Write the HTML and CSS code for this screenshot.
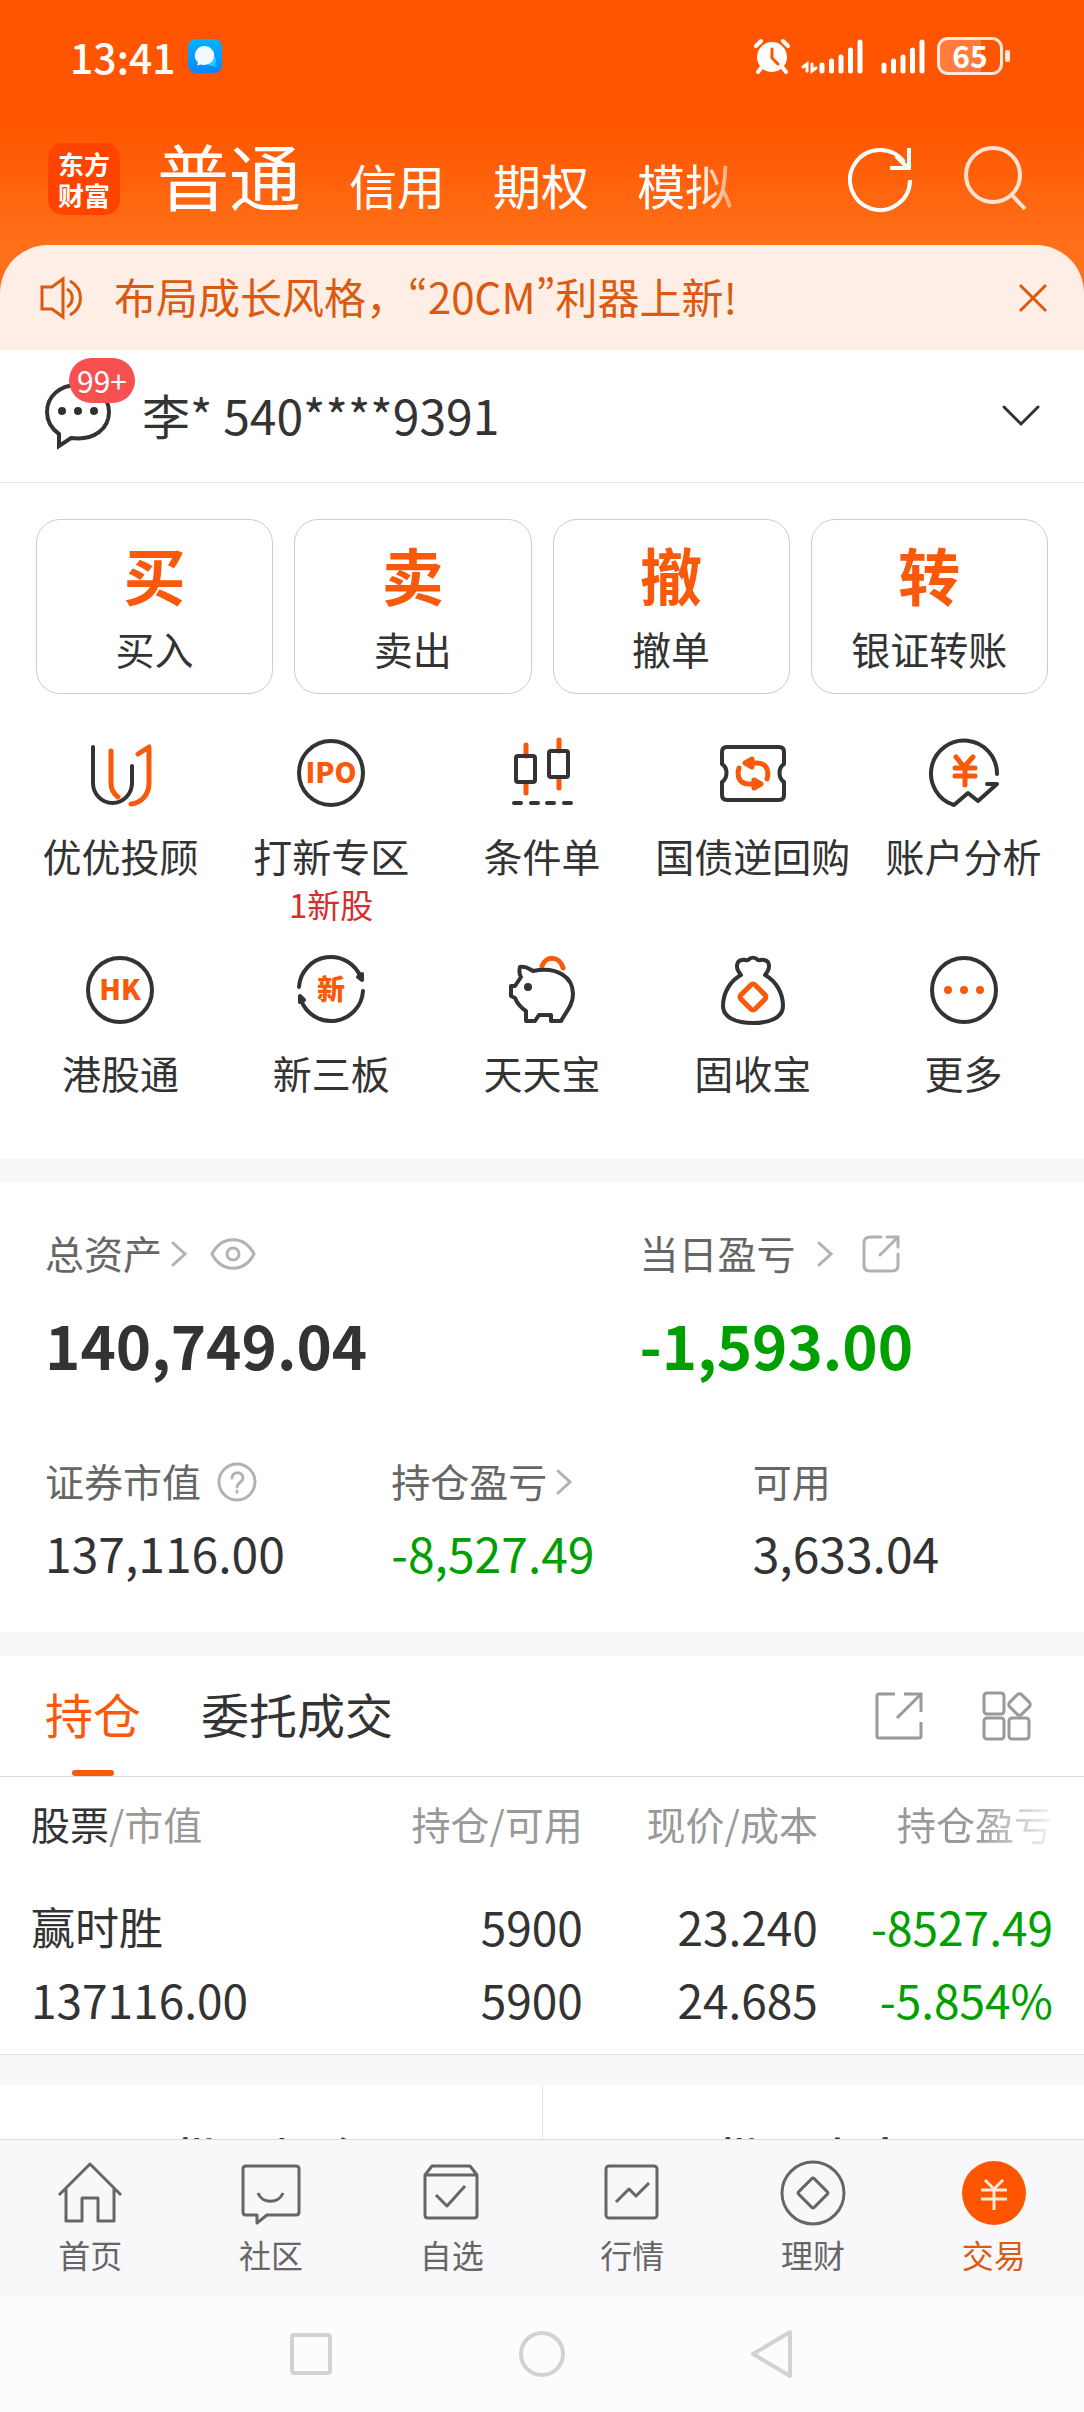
FILE: index.html
```
<!DOCTYPE html>
<html lang="zh-CN">
<head>
  <meta charset="UTF-8">
  <meta name="viewport" content="width=device-width, initial-scale=1.0">
  <title>交易 - 东方财富</title>
  <link rel="stylesheet" href="styles.css">
</head>
<body>
  <div class="top">
    <!-- Status bar -->
    <div class="status-bar">
      <span class="status-time">13:41</span>
      <svg class="status-chat" width="34" height="34" viewBox="0 0 34 34">
        <defs>
          <linearGradient id="chat-bg" x1="0" y1="0" x2="0" y2="1">
            <stop offset="0" stop-color="#00b4ff"/>
            <stop offset="1" stop-color="#0a84ff"/>
          </linearGradient>
        </defs>
        <rect width="34" height="34" rx="8" fill="url(#chat-bg)"/>
        <path d="M19 22a6 4 0 0 0 6 5l3 1-1-3c2-3 1-6 0-7z" fill="#19d2ff"/>
        <path d="M16 7a10 9.500 0 1 1-3 18.500l-4 1 1-3A9.500 9.500 0 0 1 16 7z" fill="#f2f9ff"/>
      </svg>
      <div class="status-icons">
        <svg width="38" height="36" viewBox="0 0 38 36" fill="none" stroke="#fff" stroke-width="4" stroke-linecap="round">
          <circle cx="19" cy="19" r="15" fill="#fff" stroke="none"/>
          <path d="M3 8l5-5M35 8l-5-5M8 30l-3 4M30 30l3 4"/>
          <path d="M19 11v9l6 6" stroke="#ff5500" stroke-width="3"/>
        </svg>
        <svg class="signal" width="62" height="36" viewBox="0 0 62 36" fill="none" stroke="#fff" stroke-width="5" stroke-linecap="round">
          <path d="M6 33V26l-4 3M11 26v7l4-3" stroke-width="3"/>
          <path d="M21 27v6M30.500 23v10M40 19v14M49.500 12v21M59 4v29"/>
        </svg>
        <svg class="signal-second" width="44" height="36" viewBox="0 0 44 36" fill="none" stroke="#fff" stroke-width="5" stroke-linecap="round">
          <path d="M3 27v6M12.500 23v10M22 19v14M31.500 12v21M41 4v29"/>
        </svg>
        <div class="battery"><span>65</span></div>
      </div>
    </div>

    <!-- App header -->
    <header class="header">
      <div class="logo"><span>东方</span><span>财富</span></div>
      <nav class="header-tabs">
        <a class="header-tab active" href="#">普通</a>
        <a class="header-tab" href="#">信用</a>
        <a class="header-tab" href="#">期权</a>
        <a class="header-tab fading" href="#">模拟</a>
      </nav>
      <button class="icon-button" aria-label="刷新">
        <svg width="66" height="68" viewBox="0 0 66 68" fill="none" stroke="#fff" stroke-width="4">
          <path d="M62 35A30 30 0 1 1 56 17"/>
          <path d="M61 3v20H42M59 22L48 11"/>
        </svg>
      </button>
      <button class="icon-button" aria-label="搜索">
        <svg width="66" height="68" viewBox="0 0 66 68" fill="none" stroke="#ffe2d2" stroke-width="4">
          <circle cx="31" cy="30" r="27"/>
          <path d="M49 49l14 15"/>
        </svg>
      </button>
    </header>

    <!-- Notice -->
    <div class="notice">
      <svg width="44" height="44" viewBox="0 0 44 44" fill="none" stroke="#dc5a10" stroke-width="3">
        <path d="M3 11h10l11-8v38l-11-8H3z"/>
        <path d="M28 13c7 4 7 14 0 18M31 5c14 8 14 26 0 34"/>
      </svg>
      <p class="notice-text">布局成长风格，<span class="quote">“20CM”</span>利器上新!</p>
      <button class="icon-button" aria-label="关闭">
        <svg width="30" height="30" viewBox="0 0 30 30" fill="none" stroke="#dc5a10" stroke-width="3">
          <path d="M2 2l26 26M28 2L2 28"/>
        </svg>
      </button>
    </div>
  </div>

  <main class="content">
    <!-- Account -->
    <div class="account">
      <button class="messages" aria-label="消息">
        <svg width="68" height="68" viewBox="0 0 68 68" fill="none" stroke="#333" stroke-width="4">
          <path d="M34 3C15 3 3 15 3 30c0 10 5 17 12 22v12l12-8c24 3 38-10 38-26C65 15 52 3 34 3z"/>
          <g fill="#333" stroke="none">
            <circle cx="18" cy="29" r="4"/><circle cx="34" cy="29" r="4"/><circle cx="50" cy="29" r="4"/>
          </g>
        </svg>
        <span class="badge">99+</span>
      </button>
      <span class="account-name">李* 540****9391</span>
      <button class="icon-button" aria-label="切换账户">
        <svg width="38" height="22" viewBox="0 0 38 22" fill="none" stroke="#333" stroke-width="3" stroke-linecap="round">
          <path d="M2 2l17 17L36 2"/>
        </svg>
      </button>
    </div>

    <!-- Trade buttons -->
    <div class="trade-actions">
      <button class="trade-card"><b>买</b><span>买入</span></button>
      <button class="trade-card"><b>卖</b><span>卖出</span></button>
      <button class="trade-card"><b>撤</b><span>撤单</span></button>
      <button class="trade-card"><b>转</b><span>银证转账</span></button>
    </div>

    <!-- Services -->
    <div class="services">
      <a class="service" href="#">
        <svg class="service-icon" viewBox="0 0 72 72">
          <path class="dark" d="M9 10v36a19.500 20 0 0 0 39 0V29"/>
          <path class="orange" d="M27 14v32c0 6 3 11 7 14M54 17l11-7v36c0 12-8 20-18 21"/>
        </svg>
        <span>优优投顾</span>
      </a>
      <a class="service" href="#">
        <svg class="service-icon" viewBox="0 0 72 72">
          <circle class="dark" cx="36" cy="36" r="32"/>
          <text class="icon-text" x="36" y="46">IPO</text>
        </svg>
        <span>打新专区</span>
        <small>1新股</small>
      </a>
      <a class="service" href="#">
        <svg class="service-icon" viewBox="0 0 72 72">
          <path class="orange" d="M20 8v11M20 46v10M53 3v11M53 41v10"/>
          <rect class="dark" x="10" y="19" width="19" height="26" rx="2"/>
          <rect class="dark" x="43" y="14" width="19" height="26" rx="2"/>
          <path class="dark" d="M8 66h7M25 66h7M41 66h7M58 66h7"/>
        </svg>
        <span>条件单</span>
      </a>
      <a class="service" href="#">
        <svg class="service-icon" viewBox="0 0 72 72">
          <path class="dark" d="M10 10h52q5 0 5 5v12c-6 4-6 14 0 18v13q0 5-5 5H10q-5 0-5-5V45c6-4 6-14 0-18V15q0-5 5-5z"/>
          <path class="orange" d="M22 31c-3 10 2 16 10 16h6M50 42c3-10-2-16-10-16h-6"/>
          <path class="orange" d="M35 22v8l-7-4zM37 43v8l7-4z" fill="#f9590a"/>
        </svg>
        <span>国债逆回购</span>
      </a>
      <a class="service" href="#">
        <svg class="service-icon" viewBox="0 0 72 72">
          <path class="dark" d="M69 37A33 33 0 1 0 26 68L40 56l10 8 19-17H59"/>
          <path class="orange" d="M28 20l8 10 9-10M27 31h20M27 39h20M37 30v18"/>
        </svg>
        <span>账户分析</span>
      </a>
      <a class="service" href="#">
        <svg class="service-icon" viewBox="0 0 72 72">
          <circle class="dark" cx="36" cy="36" r="32"/>
          <text class="icon-text" x="36" y="46">HK</text>
        </svg>
        <span>港股通</span>
      </a>
      <a class="service" href="#">
        <svg class="service-icon" viewBox="0 0 72 72">
          <path class="dark" d="M4 33A32 32 0 0 1 66 24M68 37A32 32 0 0 1 6 46"/>
          <path class="dark" d="M63 23l4-3v6zM5 48l0-6 4 4z" fill="#333"/>
          <text class="icon-text" x="36" y="46">新</text>
        </svg>
        <span>新三板</span>
      </a>
      <a class="service" href="#">
        <svg class="service-icon" viewBox="0 0 72 72">
          <path class="orange" d="M36 12c4-11 18-10 21 2" stroke-width="6"/>
          <path class="dark" d="M14 13c7-1 9 2 13 4 24-5 40 6 40 23 0 11-7 18-12 27H45v-6H33l-4 6H20V57c-6-4-9-8-11-13l-4-2V32h4l6-9c-2-3-2-6-1-10z"/>
          <circle cx="22" cy="33" r="4" fill="#333"/>
        </svg>
        <span>天天宝</span>
      </a>
      <a class="service" href="#">
        <svg class="service-icon" viewBox="0 0 72 72">
          <path class="dark" d="M24 21c-6-7-5-14 1-15 3-1 4 1 6 0 3-3 7-3 10 0 2 1 3-1 6 0 6 1 7 8 1 15 11 6 18 18 18 31 0 12-14 17-30 17S6 64 6 52c0-13 7-25 18-31z"/>
          <rect class="orange" x="26" y="33" width="20" height="20" rx="3" transform="rotate(45 36 43)"/>
        </svg>
        <span>固收宝</span>
      </a>
      <a class="service" href="#">
        <svg class="service-icon" viewBox="0 0 72 72">
          <circle class="dark" cx="36" cy="36" r="32"/>
          <g fill="#f9590a">
            <circle cx="20" cy="36" r="4"/><circle cx="36" cy="36" r="4"/><circle cx="52" cy="36" r="4"/>
          </g>
        </svg>
        <span>更多</span>
      </a>
    </div>

    <!-- Assets -->
    <section class="assets">
      <div class="assets-main">
        <div>
          <div class="label">总资产
            <svg class="chevron" viewBox="0 0 18 28"><path d="M3 3l12 11L3 25"/></svg>
            <svg class="eye" width="46" height="34" viewBox="0 0 46 34">
              <path d="M2 17C12-2 34-2 44 17 34 36 12 36 2 17z"/><circle cx="23" cy="17" r="6"/>
            </svg>
          </div>
          <div class="total">140,749.04</div>
        </div>
        <div>
          <div class="label">当日盈亏
            <svg class="chevron spaced" viewBox="0 0 18 28"><path d="M3 3l12 11L3 25"/></svg>
            <svg class="share" width="40" height="40" viewBox="0 0 40 40">
              <path d="M20 3H9Q3 3 3 9v22q0 6 6 6h22q6 0 6-6V20M26 3h11v10M36 4L19 21"/>
            </svg>
          </div>
          <div class="total down">-1,593.00</div>
        </div>
      </div>
      <div class="assets-detail">
        <div>
          <div class="label">证券市值
            <svg class="help" width="40" height="40" viewBox="0 0 40 40">
              <circle cx="20" cy="20" r="18"/>
              <path d="M15 16c0-7 11-7 11 0 0 4-6 5-6 9M20 29v1"/>
            </svg>
          </div>
          <div class="amount">137,116.00</div>
        </div>
        <div>
          <div class="label">持仓盈亏
            <svg class="chevron" viewBox="0 0 18 28"><path d="M3 3l12 11L3 25"/></svg>
          </div>
          <div class="amount down">-8,527.49</div>
        </div>
        <div>
          <div class="label">可用</div>
          <div class="amount">3,633.04</div>
        </div>
      </div>
    </section>

    <!-- Positions -->
    <section class="positions">
      <div class="position-tabs">
        <button class="position-tab active">持仓</button>
        <button class="position-tab">委托成交</button>
        <div class="position-tools">
          <button class="icon-button" aria-label="分享">
            <svg width="48" height="48" viewBox="0 0 48 48" fill="none" stroke="#999" stroke-width="3">
              <path d="M20 2H4Q2 2 2 4v40q0 2 2 2h40q2 0 2-2V30M29 2h17v18M45 3L22 26"/>
            </svg>
          </button>
          <button class="icon-button" aria-label="布局">
            <svg width="50" height="50" viewBox="0 0 50 50" fill="none" stroke="#999" stroke-width="3">
              <rect x="2" y="2" width="20" height="21" rx="3"/>
              <rect x="2" y="27" width="20" height="21" rx="3"/>
              <rect x="27" y="27" width="20" height="21" rx="3"/>
              <rect x="29" y="5" width="17" height="17" rx="3" transform="rotate(45 37.500 13.500)"/>
            </svg>
          </button>
        </div>
      </div>
      <table class="holdings">
        <thead>
          <tr>
            <th><span class="sorted">股票</span>/市值</th>
            <th>持仓/可用</th>
            <th>现价/成本</th>
            <th><span class="fade-out">持仓盈亏</span></th>
          </tr>
        </thead>
        <tbody>
          <tr>
            <td><span class="stock-name">赢时胜</span><br>137116.00</td>
            <td>5900<br>5900</td>
            <td>23.240<br>24.685</td>
            <td class="down">-8527.49<br>-5.854%</td>
          </tr>
        </tbody>
      </table>
    </section>

    <div class="batch">
      <button class="batch-button">批量加仓</button>
      <button class="batch-button">批量卖出</button>
    </div>
  </main>

  <!-- Bottom tabs -->
  <nav class="tab-bar">
    <a class="tab" href="#">
      <svg viewBox="0 0 66 66"><path d="M2 35L33 4l31 31M9 29v32h16V38h16v23h16V29"/></svg>
      <span>首页</span>
    </a>
    <a class="tab" href="#">
      <svg viewBox="0 0 66 66"><path d="M8 6h50q3 0 3 3v43q0 3-3 3H29l-10 8v-8H8q-3 0-3-3V9q0-3 3-3zM20 33c4 11 21 11 25 0"/></svg>
      <span>社区</span>
    </a>
    <a class="tab" href="#">
      <svg viewBox="0 0 66 66"><path d="M6 15l7-9h38l7 9v40q0 3-3 3H9q-3 0-3-3zM6 15h52M17 35l11 11 18-20"/></svg>
      <span>自选</span>
    </a>
    <a class="tab" href="#">
      <svg viewBox="0 0 66 66"><rect x="7" y="6" width="51" height="52" rx="3"/><path d="M17 42l13-13 7 7 13-13"/></svg>
      <span>行情</span>
    </a>
    <a class="tab" href="#">
      <svg viewBox="0 0 66 66"><circle cx="33" cy="33" r="31"/><rect x="22" y="22" width="22" height="22" rx="2" transform="rotate(45 33 33)"/></svg>
      <span>理财</span>
    </a>
    <a class="tab active" href="#">
      <svg viewBox="0 0 66 66"><circle cx="33" cy="33" r="32" fill="#ff5500" stroke="none"/><path d="M24 20l9 9 9-9M20 30h26M20 39h26M33 29v21" stroke="#ffe9d8"/></svg>
      <span>交易</span>
    </a>
  </nav>

  <!-- System navigation -->
  <div class="system-nav">
    <button class="icon-button" aria-label="最近任务">
      <svg width="50" height="50" viewBox="0 0 50 50"><rect x="6" y="6" width="38" height="38" rx="2"/></svg>
    </button>
    <button class="icon-button" aria-label="主屏幕">
      <svg width="50" height="50" viewBox="0 0 50 50"><circle cx="25" cy="25" r="21"/></svg>
    </button>
    <button class="icon-button" aria-label="返回">
      <svg width="50" height="50" viewBox="0 0 50 50"><path d="M5 25L42 3v44z" stroke-linejoin="round"/></svg>
    </button>
  </div>
</body>
</html>
```

FILE: styles.css
```
* {
  box-sizing: border-box;
}

body {
  display: flex;
  flex-direction: column;
  height: 100vh;
  margin: 0;
  overflow: hidden;
  font-family: "Noto Sans CJK SC", "Noto Sans", sans-serif;
  font-size: 39px;
  line-height: 48px;
  color: #333;
  background-color: #fff;
}

a {
  color: inherit;
  text-decoration: none;
}

button {
  padding: 0;
  border: none;
  background: none;
  font: inherit;
  color: inherit;
  cursor: pointer;
}

svg {
  display: block;
  flex-shrink: 0;
}

/* Orange top area */
.top {
  flex-shrink: 0;
  background: linear-gradient(to bottom, #ff5500 125px, #ff7019 245px);
}

.status-bar {
  display: flex;
  align-items: center;
  height: 112px;
  padding: 0 81px 0 70px;
  color: #fff;
}

.status-time {
  font-size: 41px;
  font-weight: 500;
}

.status-chat {
  margin-left: 12px;
}

.status-icons {
  display: flex;
  align-items: center;
  margin-left: auto;
}

.signal {
  margin-left: 10px;
}

.signal-second {
  margin-left: 18px;
}

.battery {
  position: relative;
  width: 66px;
  height: 38px;
  margin-left: 12px;
  border: 3px solid #ffe9dd;
  border-radius: 11px;
  background: linear-gradient(to right, #ff7c3c 68%, transparent 68%);
  font-size: 30px;
  font-weight: 700;
  line-height: 30px;
  text-align: center;
}

.battery::after {
  content: "";
  position: absolute;
  top: 10px;
  right: -10px;
  width: 5px;
  height: 12px;
  border-radius: 2px;
  background-color: #ffe9dd;
}

.header {
  display: flex;
  align-items: center;
  height: 133px;
  padding: 0 56px 0 48px;
  color: #fff;
}

.logo {
  display: flex;
  flex-direction: column;
  justify-content: center;
  align-items: center;
  width: 72px;
  height: 72px;
  border-radius: 15px;
  background-color: #ff4400;
  font-size: 26px;
  font-weight: 700;
  line-height: 31px;
}

.header-tabs {
  display: flex;
  flex: 1;
  align-items: baseline;
  gap: 48px;
  padding-left: 37px;
}

.header-tab {
  font-size: 48px;
  line-height: 72px;
}

.header-tab.active {
  font-size: 72px;
}

.header-tab.fading {
  -webkit-mask-image: linear-gradient(to right, #000 65%, rgba(0, 0, 0, 0.4));
  mask-image: linear-gradient(to right, #000 65%, rgba(0, 0, 0, 0.4));
}

.header .icon-button + .icon-button {
  margin-left: 48px;
}

.notice {
  display: flex;
  align-items: center;
  height: 105px;
  padding: 0 36px 0 39px;
  border-radius: 48px 48px 0 0;
  background-color: #ffeee6;
  color: #dc5a10;
}

.notice-text {
  flex: 1;
  margin: 0 0 0 31px;
  padding-bottom: 4px;
  font-size: 42px;
}

.quote {
  font-feature-settings: "pwid";
}

/* Content */
.content {
  flex: 1;
  min-height: 0;
  overflow: hidden;
}

.account {
  display: flex;
  align-items: center;
  height: 133px;
  padding: 0 44px;
  border-bottom: 1px solid #e5e5e5;
}

.messages {
  position: relative;
}

.badge {
  position: absolute;
  top: -24px;
  left: 25px;
  width: 66px;
  border-radius: 23px;
  background-color: #f75050;
  color: #fff;
  font-size: 30px;
  line-height: 45px;
}

.account-name {
  flex: 1;
  margin-left: 30px;
  padding-bottom: 4px;
  font-size: 48px;
}

.trade-actions {
  display: grid;
  grid-template-columns: repeat(4, 1fr);
  gap: 21px;
  padding: 36px 36px 43px;
}

.trade-card {
  display: flex;
  flex-direction: column;
  align-items: center;
  height: 175px;
  padding-top: 21px;
  border: 1px solid #ccc;
  border-radius: 24px;
}

.trade-card b {
  margin-bottom: 17px;
  color: #f9590a;
  font-size: 62px;
  line-height: 66px;
}

.services {
  display: grid;
  grid-template-columns: repeat(5, 1fr);
  row-gap: 30px;
  padding: 0 15px 63px;
}

.service {
  display: flex;
  flex-direction: column;
  align-items: center;
  white-space: nowrap;
}

.service-icon {
  width: 72px;
  height: 72px;
  margin-bottom: 22px;
  fill: none;
  stroke-linecap: round;
  stroke-linejoin: round;
}

.service-icon .dark {
  stroke: #333;
  stroke-width: 4;
}

.service-icon .orange {
  stroke: #f9590a;
  stroke-width: 5;
}

.icon-text {
  fill: #f9590a;
  font-size: 28px;
  font-weight: 900;
  text-anchor: middle;
}

.service small {
  margin-top: 5px;
  color: #d32f2f;
  font-size: 33px;
  line-height: 40px;
}

/* Assets */
.assets {
  padding: 45px 0 50px 45px;
  border-top: 24px solid #f7f8fa;
}

.assets-main {
  display: grid;
  grid-template-columns: 594fr 444fr;
  margin-bottom: 76px;
}

.assets-detail {
  display: grid;
  grid-template-columns: 346fr 361fr 331fr;
}

.label {
  display: flex;
  align-items: center;
  height: 48px;
  color: #666;
}

.label svg {
  margin-top: 4px;
  fill: none;
  stroke: #b2b2b2;
  stroke-width: 3;
  stroke-linecap: round;
}

.label .chevron {
  width: 18px;
  height: 28px;
  margin-left: 8px;
}

.label .chevron.spaced {
  margin-left: 20px;
}

.eye {
  margin-left: 22px;
}

.share {
  margin-left: 27px;
}

.help {
  margin-left: 16px;
}

.total {
  margin-top: 32px;
  font-size: 60px;
  font-weight: 700;
  line-height: 72px;
}

.amount {
  margin-top: 18px;
  font-size: 48px;
  line-height: 60px;
}

.down {
  color: #009f00;
}

/* Positions */
.positions {
  border-top: 24px solid #f7f8fa;
  border-bottom: 1px solid #e5e5e5;
}

.position-tabs {
  display: flex;
  align-items: stretch;
  height: 121px;
  padding: 0 52px 0 45px;
  border-bottom: 1px solid #ddd;
}

.position-tab {
  position: relative;
  margin-right: 60px;
  padding-bottom: 6px;
  font-size: 48px;
}

.position-tab.active {
  color: #f9590a;
}

.position-tab.active::after {
  content: "";
  position: absolute;
  bottom: 0;
  left: 50%;
  width: 42px;
  height: 6px;
  border-radius: 3px;
  background-color: #f9590a;
  transform: translateX(-50%);
}

.position-tools {
  display: flex;
  align-items: center;
  gap: 59px;
  margin-left: auto;
}

.holdings {
  width: calc(100% - 62px);
  margin: 0 31px;
  border-collapse: collapse;
  table-layout: fixed;
  text-align: right;
}

.holdings th {
  width: 23%;
  padding: 22px 0 24px;
  color: #999;
  font-weight: 400;
}

.holdings th:first-child {
  width: 31%;
}

.holdings td {
  padding: 18px 0;
  font-size: 46px;
  line-height: 73px;
}

.holdings th:first-child,
.holdings td:first-child {
  text-align: left;
}

.stock-name {
  font-size: 44px;
}

.sorted {
  color: #333;
}

.fade-out {
  -webkit-mask-image: linear-gradient(to right, #000 50%, rgba(0, 0, 0, 0.1));
  mask-image: linear-gradient(to right, #000 50%, rgba(0, 0, 0, 0.1));
}

.batch {
  display: flex;
  border-top: 30px solid #f7f8fa;
}

.batch-button {
  flex: 1;
  height: 144px;
  font-size: 48px;
  font-weight: 500;
}

.batch-button + .batch-button {
  border-left: 1px solid #e5e5e5;
}

/* Bottom tabs */
.tab-bar {
  display: flex;
  flex-shrink: 0;
  height: 157px;
  border-top: 1px solid #ddd;
  background-color: #f8f8fa;
  color: #666;
}

.tab {
  display: flex;
  flex: 1;
  flex-direction: column;
  align-items: center;
  padding-top: 20px;
  font-size: 32px;
  line-height: 40px;
}

.tab svg {
  width: 66px;
  height: 66px;
  margin-bottom: 8px;
  fill: none;
  stroke: #666;
  stroke-width: 3;
  stroke-linejoin: round;
}

.tab.active {
  color: #d95b14;
}

.system-nav {
  display: flex;
  flex-shrink: 0;
  align-items: center;
  justify-content: center;
  gap: 181px;
  height: 116px;
  background-color: #fcfcfc;
}

.system-nav svg {
  fill: none;
  stroke: #d2d2d2;
  stroke-width: 4;
}
```
